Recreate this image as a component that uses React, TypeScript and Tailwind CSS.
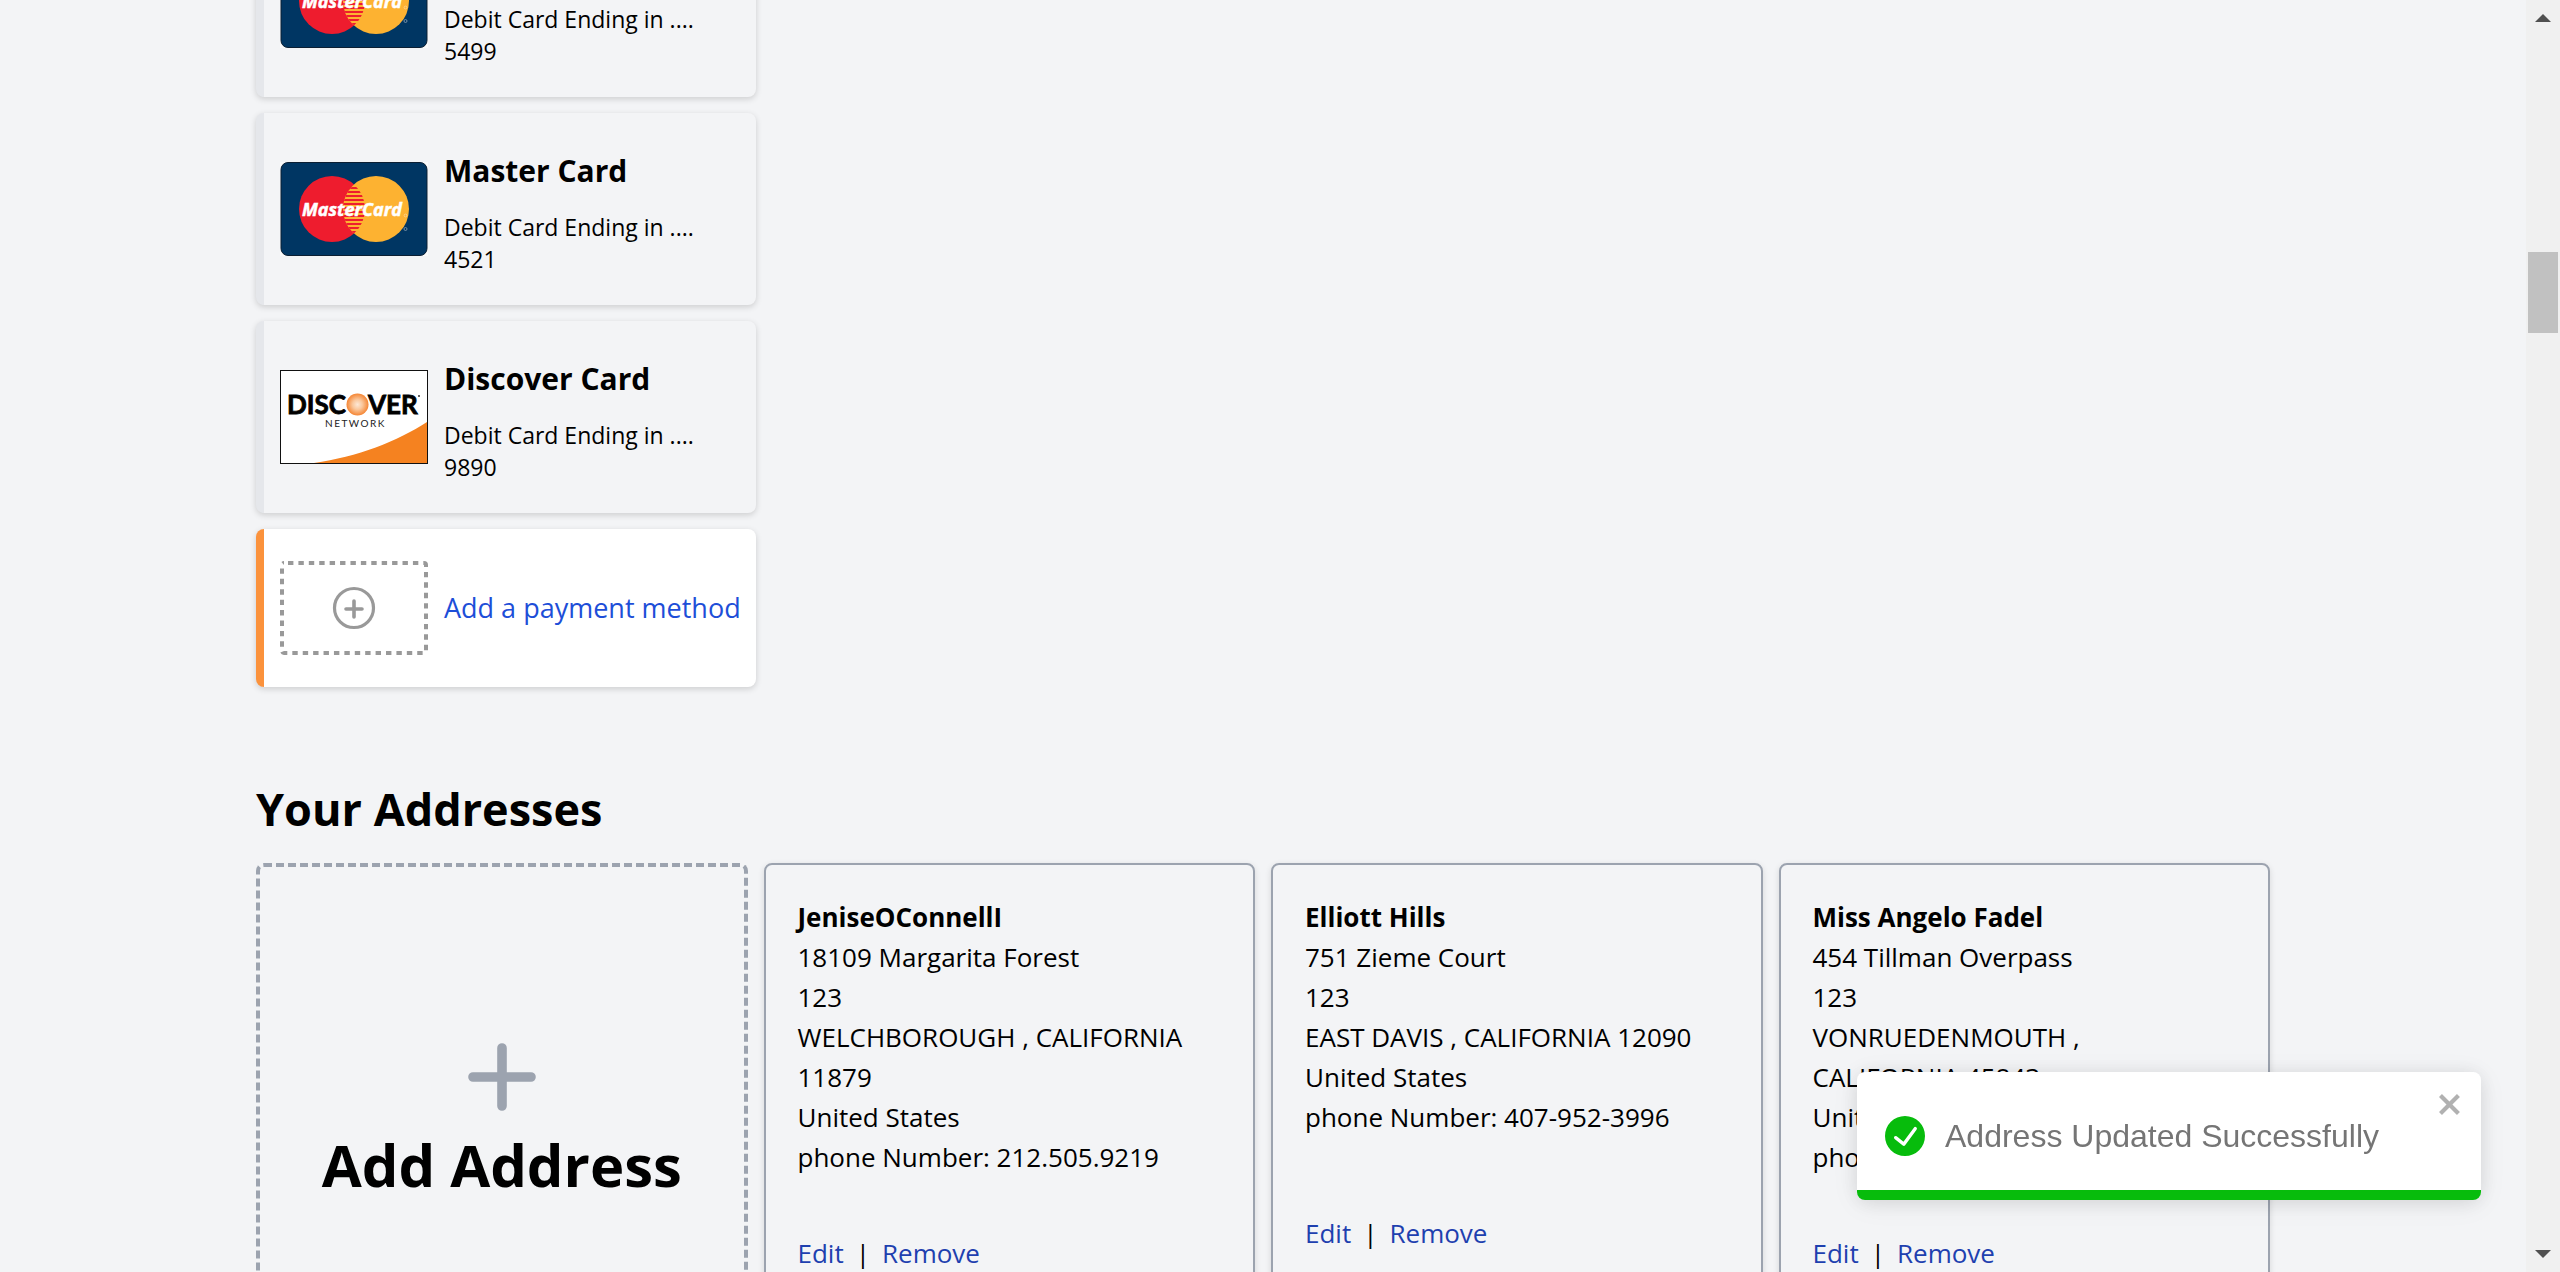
import React from "react";

type PaymentMethod = {
  brand: "master" | "discover";
  name: string;
  ending: string;
};

type Address = {
  name: string;
  street: string;
  unit: string;
  city: string;
  country: string;
  phone: string;
};

const paymentMethods: PaymentMethod[] = [
  { brand: "master", name: "Master Card", ending: "5499" },
  { brand: "master", name: "Master Card", ending: "4521" },
  { brand: "discover", name: "Discover Card", ending: "9890" },
];

const addresses: Address[] = [
  {
    name: "JeniseOConnellI",
    street: "18109 Margarita Forest",
    unit: "123",
    city: "WELCHBOROUGH , CALIFORNIA 11879",
    country: "United States",
    phone: "212.505.9219",
  },
  {
    name: "Elliott Hills",
    street: "751 Zieme Court",
    unit: "123",
    city: "EAST DAVIS , CALIFORNIA 12090",
    country: "United States",
    phone: "407-952-3996",
  },
  {
    name: "Miss Angelo Fadel",
    street: "454 Tillman Overpass",
    unit: "123",
    city: "VONRUEDENMOUTH , CALIFORNIA 45843",
    country: "United States",
    phone: "503-555-0142",
  },
];

const stripes = [25, 29, 33, 37, 41, 45, 49, 53, 57, 61, 65, 69];

function MasterCardLogo() {
  const clip = React.useId();
  return (
    <svg viewBox="0 0 148 94" className="h-[94px] w-[148px] shrink-0" aria-hidden="true">
      <rect width="148" height="94" fill="#fafafa" />
      <rect x="1" y="0.5" width="146" height="93" rx="7" fill="#003663" stroke="#0b1f33" />
      <circle cx="52" cy="47" r="33" fill="#ee1c2e" />
      <circle cx="96" cy="47" r="33" fill="#fdb231" />
      <clipPath id={clip}>
        <path d="M74 22.4A33 33 0 0 1 74 71.6A33 33 0 0 1 74 22.4Z" />
      </clipPath>
      <g clipPath={`url(#${clip})`}>
        {stripes.map((y) => (
          <rect key={y} x="60" y={y} width="28" height="2" fill="#ee1c2e" />
        ))}
      </g>
      <text
        x="22"
        y="54"
        fill="#fff"
        stroke="#fff"
        strokeWidth=".5"
        fontFamily="'Open Sans', sans-serif"
        fontSize="18"
        fontStyle="italic"
        fontWeight="700"
      >
        MasterCard
      </text>
      <circle cx="125.500" cy="53.500" r="1.400" fill="none" stroke="#fff" strokeWidth=".5" opacity=".7" />
      <circle cx="125.500" cy="67" r="1.500" fill="none" stroke="#8ba0b3" strokeWidth=".8" />
    </svg>
  );
}

function DiscoverLogo() {
  const glow = React.useId();
  return (
    <svg viewBox="0 0 148 94" className="h-[94px] w-[148px] shrink-0" aria-hidden="true">
      <defs>
        <radialGradient id={glow}>
          <stop offset="0" stopColor="#fde8d6" />
          <stop offset="0.45" stopColor="#fac79c" />
          <stop offset="1" stopColor="#f58634" />
        </radialGradient>
      </defs>
      <rect x=".5" y=".5" width="147" height="93" fill="#fff" stroke="#111" />
      <path d="M34 93C77 87 118 71 147 52V93Z" fill="#f58220" />
      <g fill="#000" stroke="#000" strokeWidth=".8" fontFamily="Lato, sans-serif" fontSize="26" fontWeight="700">
        <text x="66" y="44" textAnchor="end">
          DISC
        </text>
        <text x="88" y="44">VER</text>
      </g>
      <circle cx="77.500" cy="34.500" r="11" fill={`url(#${glow})`} />
      <circle cx="139" cy="26" r="1" fill="#333" />
      <text x="45" y="57" fill="#222" fontFamily="Lato, sans-serif" fontSize="10" letterSpacing="1.500">
        NETWORK
      </text>
    </svg>
  );
}

function AddCardIcon() {
  return (
    <svg viewBox="0 0 148 94" className="h-[94px] w-[148px] shrink-0" fill="none" stroke="#999" aria-hidden="true">
      <rect x="2" y="2" width="144" height="90" rx="2" strokeWidth="4" strokeDasharray="5.4 5.010" strokeDashoffset="-4" />
      <circle cx="74" cy="47" r="19.500" strokeWidth="3.200" />
      <path d="M66 48H82M74 40V56" strokeWidth="3.600" strokeLinecap="round" />
    </svg>
  );
}

function PaymentCard({ method }: { method: PaymentMethod }) {
  return (
    <li className="flex h-48 items-center gap-4 rounded-lg border-l-8 border-[#e5e7eb] bg-[#f3f4f6] px-4 shadow-[0_2px_6px_rgba(0,0,0,0.16)]">
      {method.brand === "master" ? <MasterCardLogo /> : <DiscoverLogo />}
      <div className="w-64 pt-2">
        <h3 className="mb-5 text-[30px] leading-10 font-bold">{method.name}</h3>
        <p className="text-[23px] leading-8">Debit Card Ending in .... {method.ending}</p>
      </div>
    </li>
  );
}

function AddressCard({ address }: { address: Address }) {
  return (
    <li className="flex flex-col rounded-lg border-2 border-[#9ca3af] py-8 pr-10 pl-8 text-[26px] leading-10 shadow-[0_2px_6px_rgba(0,0,0,0.12)]">
      <h3 className="font-bold">{address.name}</h3>
      <p>{address.street}</p>
      <p>{address.unit}</p>
      <p>{address.city}</p>
      <p>{address.country}</p>
      <p>phone Number: {address.phone}</p>
      <div className="flex flex-1 items-center gap-3 text-[#1e40af]">
        <button type="button">Edit</button>
        <span className="text-black">|</span>
        <button type="button">Remove</button>
      </div>
    </li>
  );
}

function Scrollbar() {
  return (
    <div className="flex w-[34px] shrink-0 flex-col items-center bg-[#f0f0f0]" aria-hidden="true">
      <svg viewBox="0 0 16 8" className="mt-3.5 h-2 w-4" fill="#505050">
        <path d="M0 8L8 0L16 8Z" />
      </svg>
      <div className="mt-[230px] h-[81px] w-[30px] bg-[#c1c1c1]" />
      <svg viewBox="0 0 16 8" className="mt-auto mb-3.5 h-2 w-4" fill="#505050">
        <path d="M0 0L8 8L16 0Z" />
      </svg>
    </div>
  );
}

function Toast() {
  return (
    <div
      role="alert"
      className="fixed right-[79px] bottom-[72px] flex h-32 w-[624px] items-center gap-5 overflow-hidden rounded-lg border-b-10 border-[#07bc0c] bg-white pt-2.5 pl-7 font-['Liberation_Sans',sans-serif] text-[32px] leading-10 text-[#757575] shadow-[0_2px_20px_rgba(0,0,0,0.1),0_4px_30px_rgba(0,0,0,0.06)]"
    >
      <svg viewBox="0 0 24 24" className="size-10 shrink-0" fill="#07bc0c" aria-hidden="true">
        <path d="M12 0a12 12 0 1012 12A12.014 12.014 0 0012 0zm6.927 8.2l-6.845 9.289a1.011 1.011 0 01-1.43.188l-4.888-3.908a1 1 0 111.25-1.562l4.076 3.261 6.227-8.451a1 1 0 111.61 1.183z" />
      </svg>
      <p>Address Updated Successfully</p>
      <button type="button" aria-label="close" className="absolute top-4 right-4 text-black opacity-30">
        <svg viewBox="0 0 14 16" className="h-8 w-7" fill="currentColor" aria-hidden="true">
          <path
            fillRule="evenodd"
            d="M7.71 8.23l3.75 3.75-1.48 1.48-3.75-3.75-3.75 3.75L1 11.98l3.75-3.75L1 4.48 2.48 3l3.75 3.75L9.98 3l1.48 1.48-3.75 3.75z"
          />
        </svg>
      </button>
    </div>
  );
}

export default function App() {
  return (
    <div className="flex h-screen overflow-hidden bg-[#f3f4f6] font-['Open_Sans','Noto_Sans',sans-serif] text-black">
      <main className="min-w-0 flex-1 px-64">
        <section className="-mt-[95px]">
          <ul className="flex w-[500px] flex-col gap-4">
            {paymentMethods.map((method) => (
              <PaymentCard key={method.ending} method={method} />
            ))}
            <li className="flex h-[158px] items-center gap-4 rounded-lg border-l-8 border-[#fb923c] bg-white px-4 shadow-[0_2px_6px_rgba(0,0,0,0.16)]">
              <AddCardIcon />
              <a href="#add-payment" className="text-[27px] leading-10 whitespace-nowrap text-[#1d4ed8]">
                Add a payment method
              </a>
            </li>
          </ul>
        </section>

        <section className="mt-[94px]">
          <h2 className="mb-[26px] text-[45px] leading-14 font-bold">Your Addresses</h2>
          <ul className="grid grid-cols-4 gap-4">
            <li className="flex">
              <button
                type="button"
                className="flex min-h-[500px] flex-1 flex-col items-center justify-center gap-3 rounded-lg border-4 border-dashed border-[#9ca3af] pt-3"
              >
                <svg
                  viewBox="0 0 80 80"
                  className="size-20 text-[#9ca3af]"
                  fill="none"
                  stroke="currentColor"
                  strokeWidth="9.600"
                  strokeLinecap="round"
                  aria-hidden="true"
                >
                  <path d="M40 11V69M11 40H69" />
                </svg>
                <span className="text-[58px] leading-[72px] font-bold whitespace-nowrap">Add Address</span>
              </button>
            </li>
            {addresses.map((address) => (
              <AddressCard key={address.name} address={address} />
            ))}
          </ul>
        </section>
      </main>
      <Scrollbar />
      <Toast />
    </div>
  );
}
